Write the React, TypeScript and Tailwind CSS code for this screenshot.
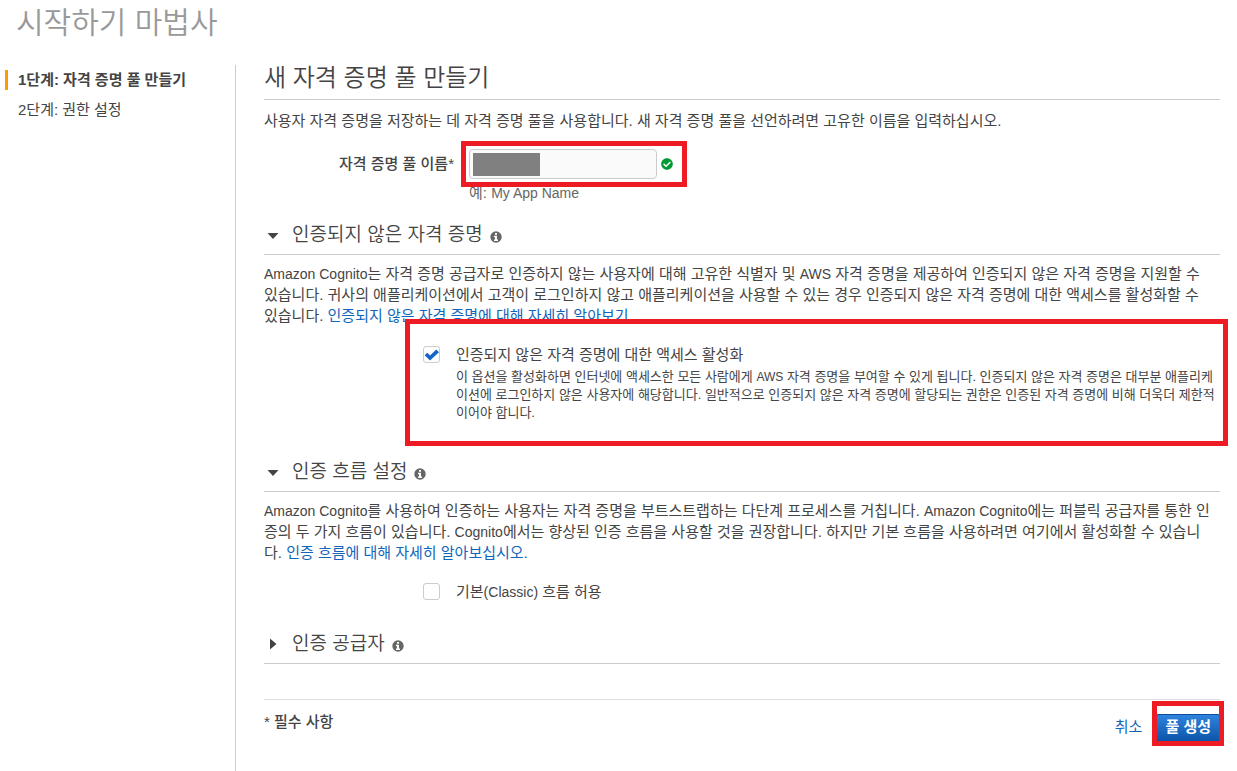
import React from 'react'
import { FaCheckCircle } from 'react-icons/fa'

const Latin = ({ children }: { children: React.ReactNode }) => (
  <span className="text-sm">{children}</span>
)

const Highlight = ({ className }: { className: string }) => (
  <div className={`absolute border-5 border-[#ed1c24] pointer-events-none ${className}`} />
)

const InfoIcon = () => (
  <svg viewBox="0 0 12 12" className="ml-[7px] mt-[3px] h-3 w-3" aria-hidden="true">
    <circle cx="6" cy="6" r="5.700" fill="#666" />
    <path fill="#fff" d="M5 2h2v1.700H5zM4 4.700h3v3.700h1V10H4V8.400h1V6.200H4z" />
  </svg>
)

const SectionTitle = ({ open, className, children }: {
  open: boolean;
  className: string;
  children: React.ReactNode;
}) => (
  <h3 className={`flex items-center border-b border-[#ccc] pb-[7px] ${className}`}>
    <button type="button" aria-expanded={open} className="flex items-center text-[19px] leading-6 font-[350]">
      <span className="flex w-7 pl-[3px]">
        <svg viewBox="0 0 12 12" className="h-3 w-3 fill-[#444]" aria-hidden="true">
          {open ? <path d="M0.500 4h11L6 10z" /> : <path d="M3 0.500v11L9.500 6z" />}
        </svg>
      </span>
      {children}
    </button>
    <InfoIcon />
  </h3>
)

const Option = ({ id, label, defaultChecked, children }: {
  id: string;
  label: React.ReactNode;
  defaultChecked?: boolean;
  children?: React.ReactNode;
}) => (
  <div className="relative mt-[18px] flex pl-[159px]">
    <span className="relative mt-[2px] mr-4 h-[17px] w-[17px] shrink-0">
      <input
        id={id}
        type="checkbox"
        defaultChecked={defaultChecked}
        className="peer block h-full w-full appearance-none rounded-[3px] border border-[#ccc] bg-white"
      />
      <svg
        viewBox="0 0 17 17"
        className="pointer-events-none absolute inset-0 hidden h-full w-full fill-[#1565c8] peer-checked:block"
        aria-hidden="true"
      >
        <path d="M1.700 9.300 4.200 6.800 7 9.500 13.300 3.500 16 6.200 7 14.500z" />
      </svg>
    </span>
    <div>
      <label htmlFor={id} className="block">{label}</label>
      {children}
    </div>
  </div>
)

export default function App() {
  return (
    <div className="flex min-h-screen flex-col bg-white font-['Liberation_Sans','Noto_Sans_CJK_KR',sans-serif] text-[15px] leading-[21px] break-all text-[#444]">
      <h1 className="px-4 pt-[1px] pb-5 text-3xl leading-[44px] font-[350] text-[#999]">시작하기 마법사</h1>

      <div className="flex grow">
        <nav className="w-[236px] shrink-0 border-r border-[#ccc] pt-[5px] pl-[5px]">
          <a href="#step1" className="block border-l-3 border-[#f90] pl-[10px] leading-5 font-bold">
            1단계: 자격 증명 풀 만들기
          </a>
          <a href="#step2" className="mt-[10px] block pl-[13px] leading-5">2단계: 권한 설정</a>
        </nav>

        <main className="min-w-0 grow pr-[17px] pl-7">
          <h2 className="border-b border-[#ccc] pt-[1px] pb-[9px] text-2xl leading-6 font-[350]">새 자격 증명 풀 만들기</h2>
          <p className="mt-[10px]">
            사용자 자격 증명을 저장하는 데 자격 증명 풀을 사용합니다. 새 자격 증명 풀을 선언하려면 고유한 이름을 입력하십시오.
          </p>

          <div className="mt-[18px] flex">
            <label htmlFor="pool-name" className="w-[190px] shrink-0 text-right leading-[30px] font-medium">
              자격 증명 풀 이름*
            </label>
            <div className="ml-[15px]">
              <div className="relative flex items-center">
                <input
                  id="pool-name"
                  type="text"
                  className="h-[30px] w-[188px] rounded-[4px] border border-[#ccc] bg-[#fafafa] px-2"
                />
                <span className="absolute top-1 left-1 h-[23px] w-[67px] bg-[#808080]" />
                <FaCheckCircle className="ml-1 h-3 w-3 text-[#093]" />
                <Highlight className="-top-2 -right-[14px] -bottom-2 -left-2" />
              </div>
              <p className="mt-1 leading-5 text-[#666]">예: <Latin>My App Name</Latin></p>
            </div>
          </div>

          <SectionTitle open className="mt-5">인증되지 않은 자격 증명</SectionTitle>
          <p className="mt-2">
            <Latin>Amazon Cognito</Latin>는 자격 증명 공급자로 인증하지 않는 사용자에 대해 고유한 식별자 및 <Latin>AWS</Latin> 자격 증명을 제공하여 인증되지 않은 자격 증명을 지원할 수<br />
            있습니다. 귀사의 애플리케이션에서 고객이 로그인하지 않고 애플리케이션을 사용할 수 있는 경우 인증되지 않은 자격 증명에 대한 액세스를 활성화할 수<br />
            있습니다. <a href="#identities" className="text-[#1166bb]">인증되지 않은 자격 증명에 대해 자세히 알아보기</a>
          </p>
          <Option id="allow-guest" defaultChecked label="인증되지 않은 자격 증명에 대한 액세스 활성화">
            <p className="mt-[3px] text-[13px] leading-[18px]">
              이 옵션을 활성화하면 인터넷에 액세스한 모든 사람에게 <span className="text-xs">AWS</span> 자격 증명을 부여할 수 있게 됩니다. 인증되지 않은 자격 증명은 대부분 애플리케<br />
              이션에 로그인하지 않은 사용자에 해당합니다. 일반적으로 인증되지 않은 자격 증명에 할당되는 권한은 인증된 자격 증명에 비해 더욱더 제한적<br />
              이어야 합니다.
            </p>
            <Highlight className="-top-[25px] -right-2 -bottom-6 left-[141px]" />
          </Option>

          <SectionTitle open className="mt-[38px]">인증 흐름 설정</SectionTitle>
          <p className="mt-2">
            <Latin>Amazon Cognito</Latin>를 사용하여 인증하는 사용자는 자격 증명을 부트스트랩하는 다단계 프로세스를 거칩니다. <Latin>Amazon Cognito</Latin>에는 퍼블릭 공급자를 통한 인<br />
            증의 두 가지 흐름이 있습니다. <Latin>Cognito</Latin>에서는 향상된 인증 흐름을 사용할 것을 권장합니다. 하지만 기본 흐름을 사용하려면 여기에서 활성화할 수 있습니<br />
            다. <a href="#flows" className="text-[#1166bb]">인증 흐름에 대해 자세히 알아보십시오.</a>
          </p>
          <Option id="allow-classic" label={<>기본<Latin>(Classic)</Latin> 흐름 허용</>} />

          <SectionTitle open={false} className="mt-[30px]">인증 공급자</SectionTitle>

          <div className="mt-[35px] flex items-start justify-between border-t border-[#ddd]">
            <p className="mt-[11px] font-medium">* 필수 사항</p>
            <div className="mt-3 flex items-start">
              <a href="#cancel" className="mt-1 mr-[14px] text-[#1166bb]">취소</a>
              <div className="relative">
                <button
                  type="button"
                  className="mt-[2px] block h-7 rounded-[2px] border border-[#0a4f9e] bg-linear-to-b from-[#2f83dd] to-[#0a55a8] px-2 pb-[3px] font-bold text-white"
                >
                  풀 생성
                </button>
                <Highlight className="-top-[11px] -right-1 -bottom-1 -left-1" />
              </div>
            </div>
          </div>
        </main>
      </div>
    </div>
  )
}
